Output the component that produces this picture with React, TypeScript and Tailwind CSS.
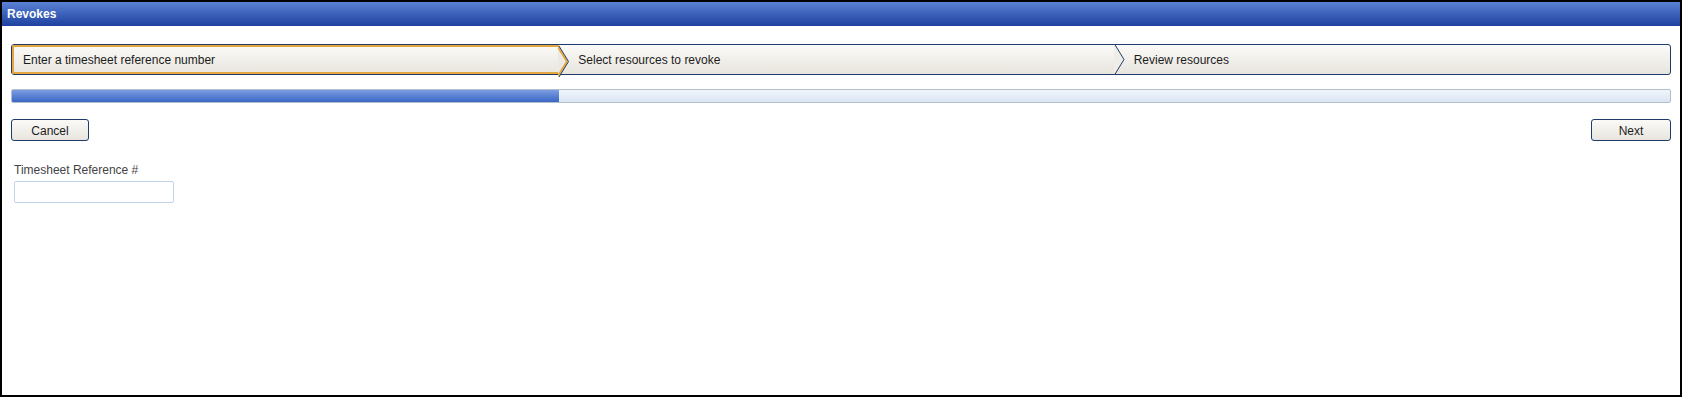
import React from "react";

const font = { fontFamily: '"Liberation Sans", Arial, sans-serif' };

function Arrow({ orange }: { orange?: boolean }) {
  return (
    <svg
      className="absolute top-[-1px] right-[-10px] z-10"
      width="11"
      height="31"
      viewBox="0 0 11 31"
    >
      {orange ? (
        <>
          <path d="M0 0 L9.5 15.5 L0 31 Z" fill="#ece9e2" />
          <path d="M0 1 L9 15.5 L0 30" fill="none" stroke="#e6a63e" strokeWidth="2" />
          <path d="M1 0 L10.5 15.5 L1 31" fill="none" stroke="#1d3b6b" strokeWidth="1" />
        </>
      ) : (
        <>
          <path d="M0 0 L9.5 15.5 L0 31 Z" fill="#efede8" />
          <path d="M0.5 0 L10 15.5 L0.5 31" fill="none" stroke="#1d3b6b" strokeWidth="1" />
        </>
      )}
    </svg>
  );
}

export default function App() {
  const steps = [
    "Enter a timesheet reference number",
    "Select resources to revoke",
    "Review resources",
  ];

  return (
    <div className="w-[1682px] h-[397px] border-2 border-black bg-white text-[12px] text-[#1c1c1c]" style={font}>
      <div className="h-[24px] bg-gradient-to-b from-[#5a82d4] to-[#1f40a0] px-[5px] flex items-center">
        <span className="text-white font-bold text-[12px]">Revokes</span>
      </div>

      <div className="px-[9px]">
        {/* wizard steps */}
        <div className="mt-[18px] flex h-[31px] rounded-[3px] border border-[#1d3b6b] bg-gradient-to-b from-[#fbfaf8] to-[#e8e5de]">
          {steps.map((s, i) => (
            <div
              key={s}
              className={
                i === 0
                  ? "relative flex-1 flex items-center pl-[9px] border-2 border-r-0 border-[#e6a63e] rounded-l-[2px]"
                  : "relative flex-1 flex items-center pl-[19px]"
              }
            >
              <span>{s}</span>
              {i < 2 && <Arrow orange={i === 0} />}
            </div>
          ))}
        </div>

        {/* progress */}
        <div className="mt-[14px] h-[14px] rounded-[2px] border border-[#b3bfcc] bg-gradient-to-b from-[#f0f5fb] to-[#dae5f3] overflow-hidden">
          <div className="h-full w-[33%] bg-gradient-to-b from-[#7b9de0] to-[#3b66c5]" />
        </div>

        {/* buttons */}
        <div className="mt-[16px] flex justify-between">
          <button className="w-[78px] h-[22px] rounded-[3px] border border-[#1d3b6b] bg-gradient-to-b from-[#fbfaf8] to-[#e8e5de] text-[12px] text-[#1c1c1c] pt-[1px]">
            Cancel
          </button>
          <button className="w-[80px] h-[22px] rounded-[3px] border border-[#1d3b6b] bg-gradient-to-b from-[#fbfaf8] to-[#e8e5de] text-[12px] text-[#1c1c1c] pt-[1px]">
            Next
          </button>
        </div>

        {/* field */}
        <div className="mt-[21px] pl-[3px]">
          <div className="text-[#444] leading-[16px]">Timesheet Reference #</div>
          <input className="mt-[3px] w-[160px] h-[22px] rounded-[2px] border border-[#c2d5ef] outline-none px-1" />
        </div>
      </div>
    </div>
  );
}
